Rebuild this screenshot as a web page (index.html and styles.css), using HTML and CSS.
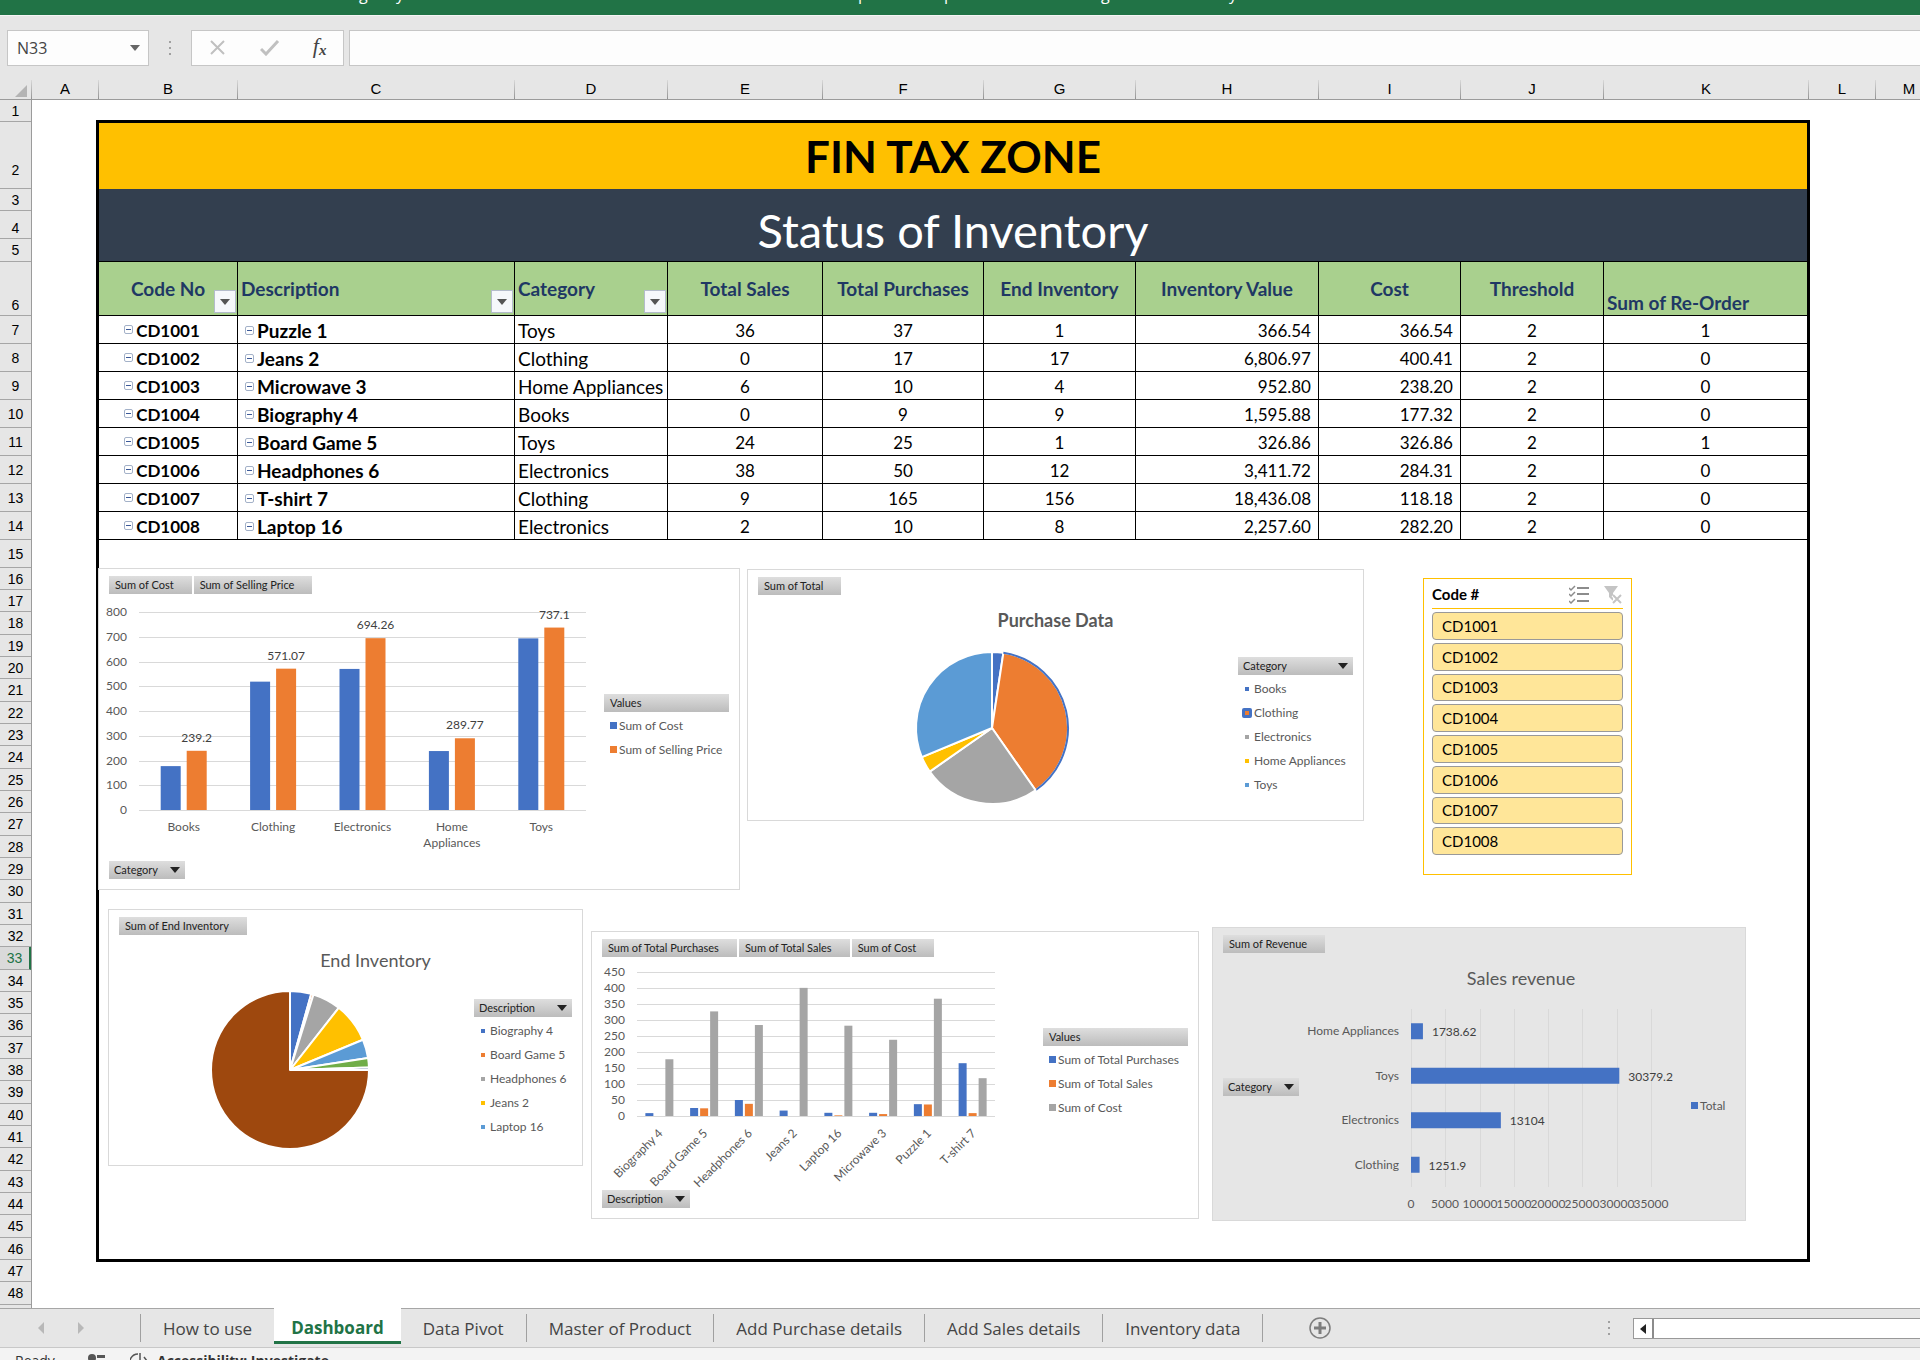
FILE: index.html
```html
<!DOCTYPE html>
<html lang="en">
	<head>
		<meta charset="UTF-8">
		<title>Status of Inventory</title>
		<link rel="stylesheet" href="styles.css">
	</head>
	<body>
	  <div class="app">
	    <div class="ribbon">
	      <svg class="ribbon-text" width="1300" height="6" aria-hidden="true">
	        <text x="359" y="0">g</text>
	        <text x="396" y="0">y</text>
	        <text x="858" y="0">p</text>
	        <text x="944" y="0">p</text>
	        <text x="1101" y="0">g</text>
	        <text x="1229" y="0">y</text>
	      </svg>
	    </div>

	    <div class="formula-bar">
	      <div class="name-box">
	        <input type="text" value="N33" aria-label="Name box">
	        <button type="button" aria-label="Show names">
	          <svg width="10" height="6"><path d="M0 0h10l-5 6z" fill="#666"/></svg>
	        </button>
	      </div>
	      <svg class="dots" width="4" height="16"><path d="M1 1h2v2h-2zM1 7h2v2h-2zM1 13h2v2h-2z" fill="#a0a0a0"/></svg>
	      <div class="fx-box">
	        <button type="button" aria-label="Cancel">
	          <svg width="18" height="16"><path d="M2 1l13 13M15 1l-13 13" stroke="#c0c0c0" stroke-width="2" fill="none"/></svg>
	        </button>
	        <button type="button" aria-label="Enter">
	          <svg width="20" height="16"><path d="M1 9l5 5L18 1" stroke="#c0c0c0" stroke-width="3" fill="none"/></svg>
	        </button>
	        <button type="button" class="fx" aria-label="Insert function"><i>f</i><sub>x</sub></button>
	      </div>
	      <input class="formula" type="text" aria-label="Formula bar">
	    </div>

	    <div class="col-head" id="colHead">
	      <div class="corner"><svg width="12" height="12"><path d="M12 0v12h-12z" fill="#b4b4b4"/></svg></div>
	    </div>

	    <div class="grid">
	      <div class="row-head" id="rowHead"></div>
	      <div class="sheet">
	        <div class="dash">
	          <h1 class="brand">FIN TAX ZONE</h1>
	          <h2 class="status-title">Status of Inventory</h2>
	          <table class="stock">
	            <colgroup>
	              <col class="cb"><col class="cc"><col class="cd"><col class="ce"><col class="cf">
	              <col class="cg"><col class="ch"><col class="ci"><col class="cj"><col class="ck">
	            </colgroup>
	            <thead>
	              <tr>
	                <th>Code No<button type="button" class="filter" aria-label="Filter Code No"><svg width="10" height="6"><path d="M0 0h10l-5 6z"/></svg></button></th>
	                <th class="l">Description<button type="button" class="filter" aria-label="Filter Description"><svg width="10" height="6"><path d="M0 0h10l-5 6z"/></svg></button></th>
	                <th class="l">Category<button type="button" class="filter" aria-label="Filter Category"><svg width="10" height="6"><path d="M0 0h10l-5 6z"/></svg></button></th>
	                <th>Total Sales</th>
	                <th>Total Purchases</th>
	                <th>End Inventory</th>
	                <th>Inventory Value</th>
	                <th>Cost</th>
	                <th>Threshold</th>
	                <th class="l low">Sum of Re-Order</th>
	              </tr>
	            </thead>
	            <tbody>
	              <tr><td class="code"><i class="fold"></i>CD1001</td><td class="desc"><i class="fold"></i>Puzzle 1</td><td class="l">Toys</td><td>36</td><td>37</td><td>1</td><td class="r">366.54</td><td class="r">366.54</td><td>2</td><td>1</td></tr>
	              <tr><td class="code"><i class="fold"></i>CD1002</td><td class="desc"><i class="fold"></i>Jeans 2</td><td class="l">Clothing</td><td>0</td><td>17</td><td>17</td><td class="r">6,806.97</td><td class="r">400.41</td><td>2</td><td>0</td></tr>
	              <tr><td class="code"><i class="fold"></i>CD1003</td><td class="desc"><i class="fold"></i>Microwave 3</td><td class="l">Home Appliances</td><td>6</td><td>10</td><td>4</td><td class="r">952.80</td><td class="r">238.20</td><td>2</td><td>0</td></tr>
	              <tr><td class="code"><i class="fold"></i>CD1004</td><td class="desc"><i class="fold"></i>Biography 4</td><td class="l">Books</td><td>0</td><td>9</td><td>9</td><td class="r">1,595.88</td><td class="r">177.32</td><td>2</td><td>0</td></tr>
	              <tr><td class="code"><i class="fold"></i>CD1005</td><td class="desc"><i class="fold"></i>Board Game 5</td><td class="l">Toys</td><td>24</td><td>25</td><td>1</td><td class="r">326.86</td><td class="r">326.86</td><td>2</td><td>1</td></tr>
	              <tr><td class="code"><i class="fold"></i>CD1006</td><td class="desc"><i class="fold"></i>Headphones 6</td><td class="l">Electronics</td><td>38</td><td>50</td><td>12</td><td class="r">3,411.72</td><td class="r">284.31</td><td>2</td><td>0</td></tr>
	              <tr><td class="code"><i class="fold"></i>CD1007</td><td class="desc"><i class="fold"></i>T-shirt 7</td><td class="l">Clothing</td><td>9</td><td>165</td><td>156</td><td class="r">18,436.08</td><td class="r">118.18</td><td>2</td><td>0</td></tr>
	              <tr><td class="code"><i class="fold"></i>CD1008</td><td class="desc"><i class="fold"></i>Laptop 16</td><td class="l">Electronics</td><td>2</td><td>10</td><td>8</td><td class="r">2,257.60</td><td class="r">282.20</td><td>2</td><td>0</td></tr>
	            </tbody>
	          </table>

	          <div class="canvas">
	            <!-- cost / selling price -->
	            <div class="chart price">
	              <div class="fields">
	                <button type="button" class="field">Sum of Cost</button>
	                <button type="button" class="field">Sum of Selling Price</button>
	              </div>
	              <div class="plot">
	                <svg id="priceChart" width="480" height="267"></svg>
	                <div class="legend w125">
	                  <button type="button" class="field">Values</button>
	                  <ul>
	                    <li><i class="key blue"></i>Sum of Cost</li>
	                    <li><i class="key orange"></i>Sum of Selling Price</li>
	                  </ul>
	                </div>
	              </div>
	              <div class="fields">
	                <button type="button" class="field drop">Category<svg width="10" height="6"><path d="M0 0h10l-5 6z"/></svg></button>
	              </div>
	            </div>

	            <!-- purchase data -->
	            <div class="chart purchase">
	              <div class="fields"><button type="button" class="field">Sum of Total</button></div>
	              <h3 class="bold">Purchase Data</h3>
	              <div class="plot">
	                <svg id="purchasePie" width="468" height="172"></svg>
	                <div class="legend w115">
	                  <button type="button" class="field drop">Category<svg width="10" height="6"><path d="M0 0h10l-5 6z"/></svg></button>
	                  <ul class="small">
	                    <li><i class="key blue"></i>Books</li>
	                    <li><i class="key orange picked"></i>Clothing</li>
	                    <li><i class="key gray"></i>Electronics</li>
	                    <li><i class="key gold"></i>Home Appliances</li>
	                    <li><i class="key sky"></i>Toys</li>
	                  </ul>
	                </div>
	              </div>
	            </div>

	            <!-- slicer -->
	            <div class="slicer">
	              <div class="slicer-head">
	                <span>Code #</span>
	                <button type="button" aria-label="Multi-select">
	                  <svg width="20" height="19" fill="none" stroke="#8c8c8c" stroke-width="2">
	                    <path d="M0 3l2 2 4-4M0 9l2 2 4-4M0 16l2 2 4-4" stroke-width="1.5"/>
	                    <path d="M8 3h12M8 9h12M8 16h12"/>
	                  </svg>
	                </button>
	                <button type="button" aria-label="Clear filter">
	                  <svg width="20" height="19">
	                    <path d="M1 1h14l-5 7v8l-4-4v-4z" fill="#c4c4c4"/>
	                    <path d="M10 10l8 8M18 10l-8 8" stroke="#fff" stroke-width="4"/>
	                    <path d="M10 10l8 8M18 10l-8 8" stroke="#c4c4c4" stroke-width="2"/>
	                  </svg>
	                </button>
	              </div>
	              <div class="slicer-list">
	                <button type="button">CD1001</button>
	                <button type="button">CD1002</button>
	                <button type="button">CD1003</button>
	                <button type="button">CD1004</button>
	                <button type="button">CD1005</button>
	                <button type="button">CD1006</button>
	                <button type="button">CD1007</button>
	                <button type="button">CD1008</button>
	              </div>
	            </div>

	            <!-- end inventory -->
	            <div class="chart ending">
	              <div class="fields"><button type="button" class="field">Sum of End Inventory</button></div>
	              <h3>End Inventory</h3>
	              <div class="plot">
	                <svg id="endPie" width="340" height="172"></svg>
	                <div class="legend w98">
	                  <button type="button" class="field drop">Description<svg width="10" height="6"><path d="M0 0h10l-5 6z"/></svg></button>
	                  <ul class="small">
	                    <li><i class="key blue"></i>Biography 4</li>
	                    <li><i class="key orange"></i>Board Game 5</li>
	                    <li><i class="key gray"></i>Headphones 6</li>
	                    <li><i class="key gold"></i>Jeans 2</li>
	                    <li><i class="key sky"></i>Laptop 16</li>
	                  </ul>
	                </div>
	              </div>
	            </div>

	            <!-- purchases / sales / cost by product -->
	            <div class="chart product">
	              <div class="fields">
	                <button type="button" class="field">Sum of Total Purchases</button>
	                <button type="button" class="field">Sum of Total Sales</button>
	                <button type="button" class="field">Sum of Cost</button>
	              </div>
	              <div class="plot">
	                <svg id="productChart" width="420" height="233"></svg>
	                <div class="legend w145">
	                  <button type="button" class="field">Values</button>
	                  <ul>
	                    <li><i class="key blue"></i>Sum of Total Purchases</li>
	                    <li><i class="key orange"></i>Sum of Total Sales</li>
	                    <li><i class="key gray"></i>Sum of Cost</li>
	                  </ul>
	                </div>
	              </div>
	              <div class="fields">
	                <button type="button" class="field drop">Description<svg width="10" height="6"><path d="M0 0h10l-5 6z"/></svg></button>
	              </div>
	            </div>

	            <!-- sales revenue -->
	            <div class="chart revenue">
	              <div class="fields"><button type="button" class="field">Sum of Revenue</button></div>
	              <h3>Sales revenue</h3>
	              <div class="plot">
	                <div class="axis-field">
	                  <button type="button" class="field drop">Category<svg width="10" height="6"><path d="M0 0h10l-5 6z"/></svg></button>
	                </div>
	                <svg id="revenueChart" width="386" height="213"></svg>
	                <div class="legend">
	                  <ul><li><i class="key blue"></i>Total</li></ul>
	                </div>
	              </div>
	            </div>
	          </div>
	        </div>
	      </div>
	    </div>

	    <div class="tabs">
	      <div class="tab-nav">
	        <button type="button" aria-label="Previous sheet"><svg width="6" height="12"><path d="M6 0v12l-6-6z" fill="#b8b8b8"/></svg></button>
	        <button type="button" aria-label="Next sheet"><svg width="6" height="12"><path d="M0 0v12l6-6z" fill="#b8b8b8"/></svg></button>
	      </div>
	      <button type="button" class="tab">How to use</button>
	      <button type="button" class="tab on">Dashboard</button>
	      <button type="button" class="tab">Data Pivot</button>
	      <button type="button" class="tab">Master of Product</button>
	      <button type="button" class="tab">Add Purchase details</button>
	      <button type="button" class="tab">Add Sales details</button>
	      <button type="button" class="tab">Inventory data</button>
	      <button type="button" class="add" aria-label="New sheet">
	        <svg width="24" height="24" fill="none" stroke="#7d7d7d"><circle cx="12" cy="12" r="10" stroke-width="1.5"/><path d="M12 6v12M6 12h12" stroke-width="3"/></svg>
	      </button>
	      <svg class="dots" width="4" height="16"><path d="M1 1h2v2h-2zM1 7h2v2h-2zM1 13h2v2h-2z" fill="#a0a0a0"/></svg>
	      <div class="hscroll">
	        <button type="button" aria-label="Scroll left"><svg width="6" height="10"><path d="M6 0v10l-6-5z" fill="#222"/></svg></button>
	      </div>
	    </div>

	    <div class="statusbar">
	      <span class="ready">Ready</span>
	      <svg width="18" height="14" fill="#555"><circle cx="5" cy="5" r="4"/><path d="M10 2h8v3h-8zM11 7h7v2h-7zM1 10h17v3h-17z"/></svg>
	      <svg class="acc" width="18" height="14" fill="none" stroke="#555" stroke-width="1.5"><path d="M8 1a8 8 0 0 0-7 12M10 0v12M14 4l3 4-3 4"/></svg>
	      <span class="acc-text">Accessibility: Investigate</span>
	    </div>
	  </div>
	  <script src="script.js"></script>
	</body>
</html>
```
FILE: styles.css
```css
html,body{
  padding: 0;
  margin: 0;
  overflow: hidden;
}
body {
  font-family: Lato, "Liberation Sans", sans-serif;
  color: #000;
}
button, input {
  font: inherit;
  color: inherit;
  margin: 0;
  padding: 0;
  border: none;
  background: none;
  box-sizing: border-box;
}
h1, h2, h3, ul {
  margin: 0;
  padding: 0;
  font-weight: normal;
  list-style: none;
}
svg {
  display: block;
  flex-shrink: 0;
}
.app {
  display: flex;
  flex-direction: column;
  height: 100vh;
  overflow: hidden;
  background: #e6e6e6;
}

/* top */
.ribbon {
  flex-shrink: 0;
  height: 15px;
  background: #217346;
  border-bottom: 1px solid #f5f5f5;
}
.ribbon-text {
  font: 16px "Open Sans", sans-serif;
  fill: #fff;
}
.formula-bar {
  flex-shrink: 0;
  display: flex;
  align-items: center;
  height: 64px;
  padding-left: 7px;
  box-sizing: border-box;
}
.name-box, .fx-box, .formula {
  height: 36px;
  box-sizing: border-box;
  background: #fdfdfd;
  border: 1px solid #c6c6c6;
}
.name-box {
  display: flex;
  align-items: center;
  width: 142px;
  padding: 0 8px 0 9px;
}
.name-box input {
  flex: 1;
  min-width: 0;
  font: 16px "Open Sans", sans-serif;
  color: #444;
}
.formula-bar .dots {
  margin: 0 19px;
}
.fx-box {
  display: flex;
  align-items: center;
  justify-content: space-around;
  width: 153px;
  margin-right: 5px;
}
.fx {
  font: 22px "Liberation Serif", serif;
  line-height: 24px;
  color: #444;
}
.fx sub {
  font-size: 15px;
  font-style: italic;
  font-weight: bold;
  vertical-align: -2px;
}
.formula {
  flex: 1;
  border-right: none;
}

/* headings */
.col-head {
  flex-shrink: 0;
  display: flex;
  height: 20px;
  box-sizing: border-box;
  border-bottom: 1px solid #9b9b9b;
  font: 15px/17px "Liberation Sans", sans-serif;
  text-align: center;
}
.col-head div {
  flex-shrink: 0;
  box-sizing: border-box;
  border-right: 1px solid;
  border-image: linear-gradient(#dcdcdc, #8f8f8f) 1;
}
.col-head .corner {
  width: 32px;
  padding: 5px 0 0 15px;
}
.grid {
  flex: 1;
  min-height: 0;
  display: flex;
  overflow: hidden;
}
.row-head {
  display: grid;
  grid-template-rows: 22px 67px 22px 28px 23px 54px repeat(9, 28px) repeat(12, 22px 22px 23px);
  width: 32px;
  flex-shrink: 0;
  box-sizing: border-box;
  border-right: 1px solid #9b9b9b;
  font: 14px/20px "Liberation Sans", sans-serif;
  text-align: center;
}
.row-head div {
  display: flex;
  align-items: center;
  justify-content: center;
  box-sizing: border-box;
  border-bottom: 1px solid #a6a6a6;
}
.row-head .low {
  align-items: flex-end;
}
.row-head .tall {
  align-items: flex-end;
  padding-bottom: 8px;
}
.row-head .sel {
  color: #217346;
  background: #dadada;
  border-right: 2px solid #217346;
}
.sheet {
  flex: 1;
  padding: 20px 0 0 64px;
  background: #fff;
}

/* dashboard range */
.dash {
  width: 1708px;
  border: 3px solid #000;
}
.brand {
  background: #ffc000;
  font-size: 44px;
  font-weight: bold;
  line-height: 66px;
  text-align: center;
}
.status-title {
  box-sizing: border-box;
  height: 73px;
  padding-top: 10px;
  border-bottom: 1px solid #000;
  background: #333f4f;
  color: #fff;
  font-size: 47px;
  line-height: 62px;
  text-align: center;
}
.stock {
  width: 1708px;
  table-layout: fixed;
  border-collapse: separate;
  border-spacing: 0;
  font-size: 17px;
  line-height: 24px;
  text-align: center;
}
.cb { width: 139px; }
.cc { width: 277px; }
.cd { width: 153px; }
.ce { width: 155px; }
.cf { width: 161px; }
.cg { width: 152px; }
.ch { width: 183px; }
.ci { width: 142px; }
.cj { width: 143px; }
.ck { width: 203px; }
.stock th, .stock td {
  box-sizing: border-box;
  padding: 0;
  border-right: 1px solid #000;
  border-bottom: 1px solid #000;
  white-space: nowrap;
  overflow: hidden;
}
.stock th:last-child, .stock td:last-child {
  border-right: none;
}
.stock th {
  position: relative;
  height: 54px;
  background: #a9d08e;
  color: #1f3864;
  font-size: 19px;
}
.stock td {
  height: 28px;
  padding-top: 2px;
}
.stock .l {
  text-align: left;
  padding-left: 3px;
  font-size: 19px;
}
.stock .low {
  vertical-align: bottom;
}
.stock .r {
  text-align: right;
  padding-right: 7px;
}
.stock .code, .stock .desc {
  font-weight: bold;
}
.stock .code {
  padding-right: 12px;
}
.stock .desc {
  text-align: left;
  padding-left: 7px;
  font-size: 19px;
}
.filter {
  position: absolute;
  right: 1px;
  bottom: 2px;
  display: flex;
  align-items: center;
  justify-content: center;
  width: 22px;
  height: 23px;
  background: #f6f8fb;
  border: 1px solid #b4bccb;
}
.filter svg, .drop svg {
  fill: #555;
}
.fold {
  display: inline-block;
  width: 5px;
  height: 1px;
  margin-right: 3px;
  padding: 3px 1px;
  border: 1px solid #a3b1c8;
  border-radius: 2px;
  background: #3b5998 content-box;
  vertical-align: 3px;
}

/* floating objects */
.canvas {
  position: relative;
  height: 719px;
}
.chart {
  position: absolute;
  display: flex;
  flex-direction: column;
  box-sizing: border-box;
  padding: 7px 10px;
  border: 1px solid #d9d9d9;
  background: #fff;
  font-size: 12px;
  color: #595959;
}
.price { left: -1px; top: 28px; width: 642px; height: 322px; padding-bottom: 10px; }
.purchase { left: 648px; top: 29px; width: 617px; height: 252px; }
.ending { left: 9px; top: 369px; width: 475px; height: 257px; }
.product { left: 492px; top: 391px; width: 608px; height: 288px; padding-bottom: 10px; }
.revenue { left: 1113px; top: 387px; width: 534px; height: 294px; background: #e6e6e6; }
.fields {
  display: flex;
  gap: 2px;
}
.field {
  height: 18px;
  padding: 0 18px 0 6px;
  background: linear-gradient(#dedede, #bcbcbc);
  font-size: 11px;
  line-height: 18px;
  text-align: left;
  white-space: nowrap;
  color: #222;
}
.drop {
  display: flex;
  align-items: center;
  justify-content: space-between;
  gap: 12px;
  padding: 0 5px;
}
.drop svg {
  fill: #222;
}
.chart h3 {
  padding: 13px 0 8px;
  font-size: 18px;
  line-height: 24px;
  text-align: center;
}
.chart .bold {
  font-weight: bold;
}
.ending h3 { padding-left: 60px; }
.revenue h3 { padding-left: 84px; }
.plot {
  flex: 1;
  min-height: 0;
  display: flex;
  align-items: center;
  justify-content: space-between;
}
.plot > svg {
  overflow: visible;
}
.plot text {
  font-size: 12px;
  fill: #595959;
}
.plot .val {
  fill: #404040;
}
.axis-field {
  padding-bottom: 38px;
}
.legend .field {
  width: 100%;
  margin-bottom: 2px;
}
.w125 { width: 125px; }
.w115 { width: 115px; }
.w98 { width: 98px; }
.w145 { width: 145px; }
.revenue .plot { justify-content: flex-start; }
.legend li {
  display: flex;
  align-items: center;
  gap: 2px;
  padding-left: 6px;
  line-height: 24px;
  white-space: nowrap;
}
.legend .small li {
  gap: 5px;
  padding-left: 7px;
}
.key {
  width: 7px;
  height: 7px;
  flex-shrink: 0;
}
.small .key {
  width: 4px;
  height: 4px;
}
.small .picked {
  margin: 0 -3px;
  border: 3px solid #4472c4;
  border-radius: 2px;
}
.blue { background: #4472c4; }
.orange { background: #ed7d31; }
.gray { background: #a5a5a5; }
.gold { background: #ffc000; }
.sky { background: #5b9bd5; }

.slicer {
  position: absolute;
  left: 1324px;
  top: 38px;
  width: 209px;
  height: 297px;
  box-sizing: border-box;
  padding: 1px 8px;
  border: 1px solid #ffc000;
  background: #fff;
  font-size: 15px;
}
.slicer-head {
  display: flex;
  align-items: center;
  gap: 14px;
  height: 28px;
  border-bottom: 1px solid #ffc000;
  font-weight: bold;
}
.slicer-head span {
  flex: 1;
}
.slicer-list {
  display: grid;
  grid-auto-rows: 1fr;
  gap: 3px;
  height: 243px;
  margin-top: 3px;
}
.slicer-list button {
  padding-left: 9px;
  background: #ffe699;
  border: 1px solid #999;
  border-radius: 4px;
  text-align: left;
}

/* bottom */
.tabs {
  flex-shrink: 0;
  display: flex;
  align-items: flex-start;
  height: 40px;
  box-sizing: border-box;
  border-top: 1px solid #a6a6a6;
  border-bottom: 1px solid #c8c8c8;
  font: 17px "Open Sans", sans-serif;
  color: #444;
}
.tab-nav {
  display: flex;
  gap: 34px;
  width: 140px;
  height: 38px;
  padding-left: 38px;
  box-sizing: border-box;
}
.tab {
  height: 28px;
  margin-top: 5px;
  padding: 0 22px;
  border-left: 1px solid #a0a0a0;
}
.tab.on {
  height: 36px;
  margin-top: -1px;
  padding: 6px 17px 0;
  background: #fff;
  border-left: none;
  border-bottom: 3px solid #217346;
  font-weight: bold;
  color: #217346;
}
.tab.on + .tab {
  border-left: none;
}
.add {
  height: 28px;
  margin-top: 5px;
  padding-left: 45px;
  border-left: 1px solid #a0a0a0;
}
.tabs .dots {
  margin: 11px 22px 0 auto;
}
.hscroll {
  width: 287px;
  height: 21px;
  margin-top: 9px;
  box-sizing: border-box;
  border: 1px solid #999;
  border-right: none;
  background: #fff;
}
.hscroll button {
  height: 19px;
  padding: 0 6px;
  border-right: 2px solid #8c8c8c;
}
.statusbar {
  flex-shrink: 0;
  display: flex;
  align-items: flex-start;
  height: 12px;
  padding: 5px 0 0 15px;
  box-sizing: border-box;
  overflow: hidden;
  background: #f3f3f3;
  font: 14px/16px "Open Sans", sans-serif;
  color: #333;
}
.ready {
  width: 72px;
}
.acc {
  margin: 0 9px 0 25px;
}
.acc-text {
  font-weight: bold;
}
```
FILE: script.js
```js
var NS = 'http://www.w3.org/2000/svg';
var BLUE = '#4472c4', ORANGE = '#ed7d31', GRAY = '#a5a5a5', GOLD = '#ffc000';
var SKY = '#5b9bd5', GREEN = '#70ad47', NAVY = '#264478', BROWN = '#9e480e';

// column letters and row numbers
var cols = {A: 67, B: 139, C: 277, D: 153, E: 155, F: 161, G: 152, H: 183, I: 142, J: 143, K: 205, L: 67, M: 67};
var colHead = document.getElementById('colHead');
for (var name in cols) {
  var c = document.createElement('div');
  c.textContent = name;
  c.style.width = cols[name] + 'px';
  colHead.appendChild(c);
}
var rowHead = document.getElementById('rowHead');
for (var i = 1; i <= 49; i++) {
  var r = document.createElement('div');
  r.textContent = i;
  if (i == 2) r.className = 'tall';
  if (i == 4 || i == 6) r.className = 'low';
  if (i == 33) r.className = 'sel';
  rowHead.appendChild(r);
}

function add(svg, tag, attrs, text) {
  var el = document.createElementNS(NS, tag);
  for (var k in attrs) el.setAttribute(k, attrs[k]);
  if (text !== undefined) el.textContent = text;
  svg.appendChild(el);
  return el;
}

// clustered columns
function columns(id, o) {
  var svg = document.getElementById(id);
  for (var v = 0; v <= o.max; v += o.step) {
    var y = Math.round(o.bottom - (o.bottom - o.top) * v / o.max);
    add(svg, 'path', {d: 'M' + o.left + ' ' + (y + 0.5) + 'H' + o.right, stroke: '#d9d9d9'});
    add(svg, 'text', {x: o.left - 12, y: y + 4, 'text-anchor': 'end'}, v);
  }
  var gw = (o.right - o.left) / o.names.length;
  o.names.forEach(function(n, g) {
    var mid = o.left + gw * (g + 0.5);
    o.series.forEach(function(s, k) {
      var h = (o.bottom - o.top) * s.data[g] / o.max;
      var x = mid + o.offset + k * (o.bar + o.gap);
      add(svg, 'rect', {x: x, y: o.bottom - h, width: o.bar, height: h, fill: s.color});
      if (s.labels) {
        add(svg, 'text', {x: x + o.bar / 2, y: o.bottom - h - 9, 'text-anchor': 'middle', 'class': 'val'}, s.data[g]);
      }
    });
    if (o.slant) {
      var tx = mid + 4, ty = o.bottom + 18;
      add(svg, 'text', {x: tx, y: ty, 'text-anchor': 'end', transform: 'rotate(-45 ' + tx + ' ' + ty + ')'}, n);
    } else {
      n.split('|').forEach(function(line, k) {
        add(svg, 'text', {x: mid, y: o.bottom + 21 + k * 16, 'text-anchor': 'middle'}, line);
      });
    }
  });
}

function pie(id, cx, cy, r, slices) {
  var svg = document.getElementById(id);
  var total = slices.reduce(function(t, s) { return t + s[0]; }, 0);
  var a = 0;
  function pt(ang, rad) {
    return (cx + rad * Math.sin(ang)) + ' ' + (cy - rad * Math.cos(ang));
  }
  slices.forEach(function(s) {
    var b = a + s[0] / total * Math.PI * 2;
    var big = b - a > Math.PI ? 1 : 0;
    add(svg, 'path', {
      d: 'M' + cx + ' ' + cy + 'L' + pt(a, r) + 'A' + r + ' ' + r + ' 0 ' + big + ' 1 ' + pt(b, r) + 'Z',
      fill: s[1], stroke: '#fff', 'stroke-width': 2, 'stroke-linejoin': 'round'
    });
    if (s[2]) {
      add(svg, 'path', {d: 'M' + pt(a, r) + 'A' + r + ' ' + r + ' 0 ' + big + ' 1 ' + pt(b, r), fill: 'none', stroke: s[2], 'stroke-width': 2});
    }
    a = b;
  });
}

function bars(id, o) {
  var svg = document.getElementById(id);
  for (var v = 0; v <= o.max; v += o.step) {
    var x = Math.round(o.left + (o.right - o.left) * v / o.max);
    add(svg, 'path', {d: 'M' + (x + 0.5) + ' ' + o.top + 'V' + o.bottom, stroke: '#d9d9d9'});
    add(svg, 'text', {x: x, y: o.bottom + 21, 'text-anchor': 'middle'}, v);
  }
  var gh = (o.bottom - o.top) / o.rows.length;
  o.rows.forEach(function(row, k) {
    var mid = o.top + gh * (k + 0.5);
    var w = (o.right - o.left) * row[1] / o.max;
    add(svg, 'rect', {x: o.left, y: mid - 8, width: w, height: 16, fill: BLUE});
    add(svg, 'text', {x: o.left - 12, y: mid + 4, 'text-anchor': 'end'}, row[0]);
    add(svg, 'text', {x: o.left + w + 9, y: mid + 5, 'class': 'val'}, row[1]);
  });
}

columns('priceChart', {
  left: 30, right: 477, top: 18, bottom: 216, max: 800, step: 100,
  bar: 20, gap: 6, offset: -23,
  names: ['Books', 'Clothing', 'Electronics', 'Home|Appliances', 'Toys'],
  series: [
    {color: BLUE, data: [177.32, 518.59, 570, 238.2, 693.4]},
    {color: ORANGE, data: [239.2, 571.07, 694.26, 289.77, 737.1], labels: true}
  ]
});

columns('productChart', {
  left: 35, right: 393, top: 15, bottom: 159, max: 450, step: 50,
  bar: 8, gap: 2, offset: -14, slant: true,
  names: ['Biography 4', 'Board Game 5', 'Headphones 6', 'Jeans 2', 'Laptop 16', 'Microwave 3', 'Puzzle 1', 'T-shirt 7'],
  series: [
    {color: BLUE, data: [9, 25, 50, 17, 10, 10, 37, 165]},
    {color: ORANGE, data: [0, 24, 38, 0, 2, 6, 36, 9]},
    {color: GRAY, data: [177.32, 326.86, 284.31, 400.41, 282.2, 238.2, 366.54, 118.18]}
  ]
});

pie('purchasePie', 234, 87, 76, [[8.6, BLUE], [136.4, ORANGE, BLUE], [90, GRAY], [12.5, GOLD], [112.5, SKY]]);
pie('endPie', 171, 87, 79, [[9, BLUE], [1, ORANGE], [12, GRAY], [17, GOLD], [8, SKY], [4, GREEN], [1, NAVY], [156, BROWN]]);

bars('revenueChart', {
  left: 112, right: 352, top: 10, bottom: 188, max: 35000, step: 5000,
  rows: [['Home Appliances', 1738.62], ['Toys', 30379.2], ['Electronics', 13104], ['Clothing', 1251.9]]
});
```
